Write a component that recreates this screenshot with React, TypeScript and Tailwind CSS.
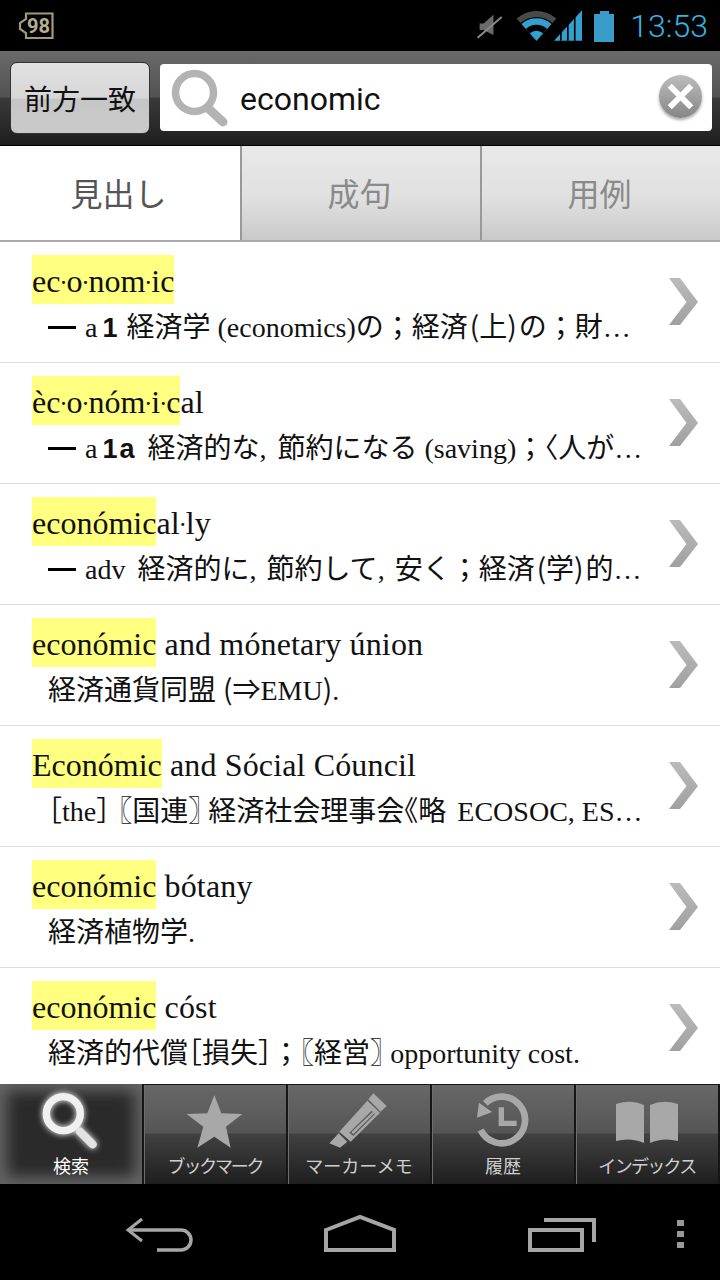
import React from "react";

type Row = { hl: string; rest?: string; sub: React.ReactNode };

const Dash = () => <span className="inline-block w-[28px] h-[3px] bg-black align-middle mr-[9px] mb-[6px]" />;
const Gap = ({ className }: { className: string }) => <span className={`inline-block ${className}`} />;
const B = ({ children, className }: { children: React.ReactNode; className: string }) => (
  <span className={`inline-block -ml-[2px] font-['Liberation_Sans'] font-bold text-[27px] tracking-[2px] ${className}`}>{children}</span>
);
const J = ({ children }: { children: React.ReactNode }) => (
  <span className="font-['Noto_Sans_CJK_JP']">{children}</span>
);
const H = ({ children }: { children: React.ReactNode }) => (
  <span className="font-['Noto_Sans_CJK_JP'] [font-feature-settings:'halt']">{children}</span>
);
const P = ({ children }: { children: React.ReactNode }) => (
  <span className="font-['Noto_Sans_CJK_JP'] inline-block px-[2px]">{children}</span>
);

function Dotted({ text }: { text: string }) {
  const parts = text.split("·");
  return (
    <>
      {parts.map((p, i) => (
        <React.Fragment key={i}>
          {i > 0 && <span className="text-[18px] font-bold leading-none align-[3px] tracking-normal">·</span>}
          {p}
        </React.Fragment>
      ))}
    </>
  );
}

const rows: Row[] = [
  { hl: "ec·o·nom·ic", sub: <><Dash />a <B className="w-[17px]">1</B> <J>経済学</J> (economics)<J>の；経済</J><P>(上)</P><J>の；財政上の；実利的な</J></> },
  { hl: "èc·o·nóm·i·c", rest: "al", sub: <><Dash />a <B className="w-[38px]">1a</B> <J>経済的な</J>,<Gap className="w-[4px]" /> <J>節約になる</J> (saving)<J>；</J><H>〈</H><J>人が</J><H>〉</H><J>倹約する</J></> },
  { hl: "económic", rest: "al·ly", sub: <><Dash />adv<Gap className="w-[5px]" /> <J>経済的に</J>,<Gap className="w-[3px]" /> <J>節約して</J>,<Gap className="w-[3px]" /> <J>安く；経済</J><P>(学)</P><J>的に見て</J></> },
  { hl: "económic", rest: " and mónetary únion", sub: <><J>経済通貨同盟</J> <H>(</H>⇒EMU<H>)</H>.</> },
  { hl: "Económic", rest: " and Sócial Cóuncil", sub: <><H>［</H>the<H>］</H><Gap className="w-[8px]" /><H>〖</H><J>国連</J><H>〗</H><Gap className="w-[6px]" /><J>経済社会理事会</J><H>《</H><J>略</J><Gap className="w-[4px]" /> ECOSOC, ESC <H>》</H><J>の略称です</J></> },
  { hl: "económic", rest: " bótany", sub: <><J>経済植物学</J>.</> },
  { hl: "económic", rest: " cóst", sub: <><J>経済的代償</J><H>［</H><J>損失</J><H>］</H><J>；</J><H>〖</H><J>経営</J><H>〗</H><Gap className="w-[6px]" />opportunity cost.</> },
];

function StatusBar() {
  return (
    <div className="h-[51px] bg-black flex items-center shrink-0">
      <svg viewBox="0 0 36 28" className="w-[36px] h-[28px] ml-[18px]" fill="none">
        <path d="M8 1.500 H34.500 V26 H8 V21 L2 17 V11 L8 7 Z" stroke="#a39a78" strokeWidth="2.200" />
        <text x="9" y="21" fontSize="20" fontFamily="Roboto" fontWeight="700" fill="#b5ad8e" textLength="23" lengthAdjust="spacingAndGlyphs">98</text>
      </svg>
      <div className="flex-1" />
      <svg viewBox="108 30 80 85" className="w-[27px] h-[28px] mr-[13px]">
        <path d="M118 65 H130 L160 38 V100 L130 85 H118 Z" fill="#6a6a6a" />
        <path d="M112 108 L185 45" stroke="#8a8a8a" strokeWidth="6" />
      </svg>
      <svg viewBox="228 28 124 92" className="w-[41px] h-[31px]">
        <path d="M290 120 L229.800 53.100 A90 90 0 0 1 350.200 53.100 Z" fill="#4a4a4a" />
        <path d="M290 120 L241.800 66.500 A72 72 0 0 1 338.200 66.500 Z" fill="#000" />
        <path d="M290 120 L244.500 69.500 A68 68 0 0 1 335.500 69.500 Z" fill="#33a0d0" />
        <path d="M290 120 L257.900 84.300 A48 48 0 0 1 322.100 84.300 Z" fill="#000" />
        <path d="M290 120 L270 97.700 A30 30 0 0 1 310 97.700 Z" fill="#33a0d0" />
      </svg>
      <svg viewBox="342 27 85 93" className="w-[28px] h-[31px] -ml-[3px] mr-[12px]">
        <path d="M342 120 L427 27 V120 Z" fill="#33a0d0" />
        <path d="M363 120 V90 M384 120 V65 M405 120 V40" stroke="#000" strokeWidth="5" />
      </svg>
      <div className="w-[20px] h-[28px] mt-[5px] relative bg-[#3a9cc8]">
        <div className="absolute -top-[3px] left-[6px] w-[9px] h-[3px] bg-[#3a9cc8]" />
      </div>
      <div className="ml-[16px] mr-[12px] text-[32px] leading-none text-[#33b5e5] font-['Roboto'] font-light">13:53</div>
    </div>
  );
}

function Toolbar() {
  return (
    <div className="h-[95px] shrink-0 flex items-center pl-[10px] pr-[8px] gap-[10px] pb-px bg-[linear-gradient(#6a6a6a_0%,#525252_49%,#3a3a3a_50%,#1e1e1e_100%)] border-b border-black">
      <div className="w-[140px] h-[72px] rounded-[7px] border border-[#333] bg-[linear-gradient(#e2e2e2_0%,#d6d6d6_50%,#c6c6c6_52%,#cacaca_100%)] flex items-center justify-center text-[28px] text-[#111] font-['Noto_Sans_CJK_JP']">
        前方一致
      </div>
      <div className="flex-1 h-[67px] bg-white rounded-[4px] flex items-center relative">
        <svg viewBox="0 0 58 60" className="w-[58px] h-[60px] ml-[11px]" fill="none">
          <circle cx="23.500" cy="24.500" r="19" stroke="#b3b3b3" strokeWidth="7.500" />
          <path d="M38 41 L52 54" stroke="#b3b3b3" strokeWidth="9" strokeLinecap="round" />
        </svg>
        <span className="ml-[11px] mt-[2px] text-[32px] text-[#111] font-['Roboto']">economic</span>
        <div className="absolute right-[10px] top-[11px] w-[43px] h-[43px] rounded-full bg-[linear-gradient(#bdbdbd,#868686)] shadow-[0_2px_3px_rgba(0,0,0,0.35)] flex items-center justify-center">
          <svg viewBox="0 0 44 44" className="w-[43px] h-[43px]">
            <path d="M11 11 L33 33 M33 11 L11 33" stroke="#fff" strokeWidth="6" />
          </svg>
        </div>
      </div>
    </div>
  );
}

function Tabs() {
  const off = "flex-1 flex items-center justify-center pr-[3px] pb-[2px] bg-[linear-gradient(#e9e9e9_0%,#e0e0e0_55%,#cacaca_100%)] border-l-2 border-[#999] text-[#8a8a8a]";
  return (
    <div className="h-[96px] shrink-0 flex border-b-[2px] border-[#aaa] text-[32px] font-['Noto_Sans_CJK_JP']">
      <div className="w-[240px] flex items-center justify-center pr-[3px] pb-[2px] bg-white text-[#555]">見出し</div>
      <div className={off}>成句</div>
      <div className={off}>用例</div>
    </div>
  );
}

function ListRow({ r }: { r: Row }) {
  return (
    <div className="h-[121px] shrink-0 border-b border-[#dcdcdc] flex relative pl-[32px]">
      <div className="pt-[13px] min-w-0 w-[614px]">
        <div className="h-[49px] leading-[53px] text-[32px] text-[#111] whitespace-pre font-['Liberation_Serif'] tracking-[0.15px]">
          <span className="bg-[#ffff80] inline-block h-[49px] tracking-normal"><Dotted text={r.hl} /></span>
          {r.rest && <Dotted text={r.rest} />}
        </div>
        <div className="pl-[16px] mt-[1px] h-[40px] leading-[40px] text-[28px] text-[#111] whitespace-nowrap overflow-hidden text-ellipsis font-['Liberation_Serif','Noto_Sans_CJK_JP',serif]">
          {r.sub}
        </div>
      </div>
      <svg viewBox="0 0 30 47" className="absolute left-[669px] top-[36px] w-[30px] h-[47px]">
        <defs>
          <linearGradient id="chev" x1="0" y1="0" x2="0" y2="1">
            <stop offset="0" stopColor="#bbbbbb" />
            <stop offset="1" stopColor="#a0a0a0" />
          </linearGradient>
        </defs>
        <path d="M0 0 H11 L29 24 L11 47 H0 L17.500 24 Z" fill="url(#chev)" />
      </svg>
    </div>
  );
}

const C = "#a8a8a8";
const Star = () => (
  <svg viewBox="543 15 204 204" className="w-[68px] h-[68px]">
    <path d="M643 45 L664 100 L727 102 L678 140 L692 203 L643 170 L592 203 L610 140 L560 102 L622 100 Z" fill={C} />
  </svg>
);
const Pen = () => (
  <svg viewBox="105 15 204 204" className="w-[68px] h-[68px]">
    <path d="M250 40 L290 78 L272 95 L235 58 Z" fill={C} />
    <path d="M232 62 L270 98 L182 185 L148 155 Z" fill={C} />
    <path d="M245 92 L255 102 L190 168 L178 158 Z" fill="#5a5a5a" />
    <path d="M250 94 L253 100 L190 162 L184 157 Z" fill={C} />
    <path d="M146 160 L172 185 L150 203 L118 190 Z" fill={C} />
  </svg>
);
const Clock = () => (
  <svg viewBox="537 15 204 204" className="w-[68px] h-[68px]" fill="none">
    <path d="M586 70 A70 70 0 1 1 572 150" stroke={C} strokeWidth="20" />
    <path d="M567 68 L561 113 L606 96 Z" fill={C} />
    <path d="M634 82 V130 H680" stroke={C} strokeWidth="16" />
  </svg>
);
const Book = () => (
  <svg viewBox="0 0 68 68" className="w-[68px] h-[68px]">
    <path d="M3 19 Q18 14 31 20 V58 Q18 52 3 56 Z" fill={C} />
    <path d="M65 19 Q50 14 37 20 V58 Q50 52 65 56 Z" fill={C} />
  </svg>
);

function BottomBar() {
  const items: [string, React.ReactNode, string][] = [
    ["ブックマーク", <Star />, "tracking-[-2.2px]"],
    ["マーカーメモ", <Pen />, "tracking-[0px]"],
    ["履歴", <Clock />, "tracking-[0px]"],
    ["インデックス", <Book />, "tracking-[-1.7px]"],
  ];
  return (
    <div className="h-[100px] shrink-0 flex bg-[linear-gradient(#686868_0%,#555_49%,#414141_50%,#1e1e1e_100%)] text-[18px] font-['Noto_Sans_CJK_JP']">
      <div className="w-[142px] flex flex-col items-center bg-[#2a2a2a] shadow-[inset_0_0_15px_7px_#666] text-white">
        <div className="h-[67px] mt-[1px] flex items-center justify-center">
          <svg viewBox="111 15 204 204" className="w-[68px] h-[68px] drop-shadow-[0_0_3px_#fff]" fill="none">
            <circle cx="190" cy="101" r="51" stroke="#f0f0f0" strokeWidth="22" />
            <path d="M240 155 L278 193" stroke="#e2e2e2" strokeWidth="24" strokeLinecap="round" />
          </svg>
        </div>
        <div className="leading-[26px]">検索</div>
      </div>
      {items.map(([label, icon, tr]) => (
        <div key={label} className="w-[144px] flex flex-col items-center border-l-2 border-t border-[#161616] text-[#cfcfcf] shadow-[inset_1px_0_0_#6e6e6e]">
          <div className="h-[67px] flex items-center justify-center">{icon}</div>
          <div className={`leading-[26px] ${tr}`}>{label}</div>
        </div>
      ))}
      <div className="w-[2px] bg-[#161616]" />
    </div>
  );
}

function NavBar() {
  return (
    <div className="flex-1 bg-black">
      <svg viewBox="0 0 720 96" className="w-[720px] h-[96px]" fill="none" stroke="#a6a6a6">
        <path d="M129 46 H181 A10 10 0 0 1 181 66 H157" strokeWidth="3.500" />
        <path d="M142 35 L128 46 L142 57" strokeWidth="3" />
        <path d="M326 46 L360 33 L394 46 V66 H326 Z" strokeWidth="4" />
        <path d="M530 46 H582 V66 H530 Z" strokeWidth="4" />
        <path d="M544 36 H594 V58" strokeWidth="4" />
        <path d="M677 36 h7 v6 h-7 Z M677 47 h7 v6 h-7 Z M677 58 h7 v6 h-7 Z" fill="#999" stroke="none" />
      </svg>
    </div>
  );
}

export default function App() {
  return (
    <div className="w-[720px] h-[1280px] flex flex-col bg-white overflow-hidden">
      <StatusBar />
      <Toolbar />
      <Tabs />
      <div className="h-[842px] shrink-0 overflow-hidden">
        {rows.map((r, i) => <ListRow key={i} r={r} />)}
      </div>
      <BottomBar />
      <NavBar />
    </div>
  );
}
